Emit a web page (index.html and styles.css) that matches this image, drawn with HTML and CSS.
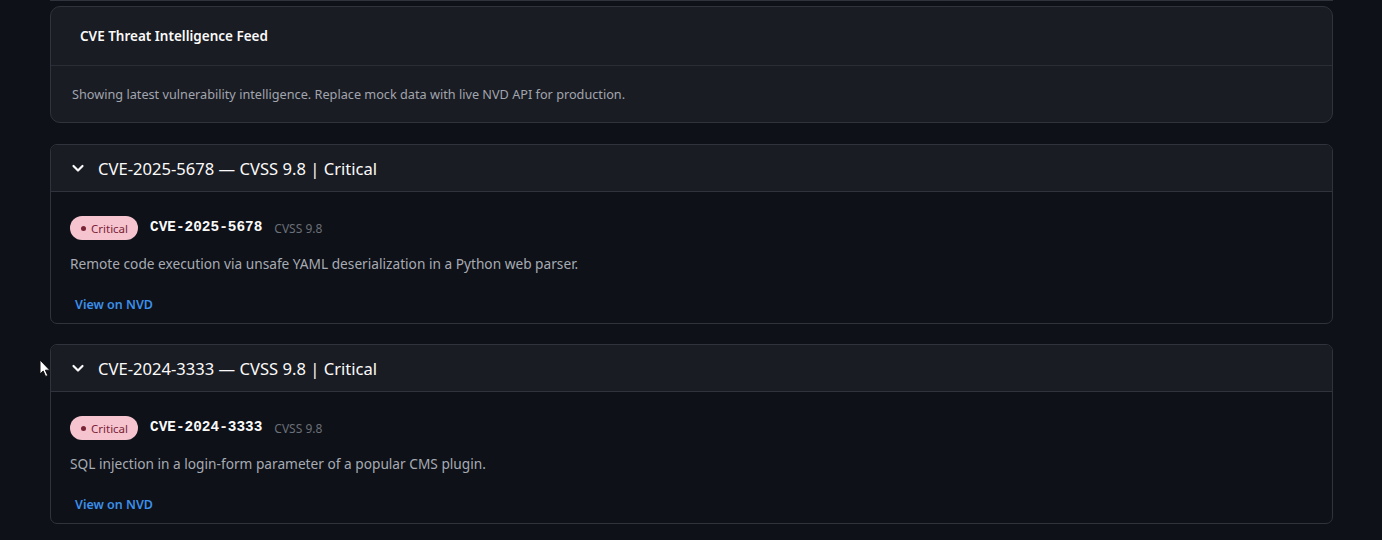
FILE: index.html
```html
<!DOCTYPE html>
<html><head>
<title>CVE Threat Intelligence Feed</title>
<link rel="stylesheet" href="styles.css">
</head><body>

<div class="main">
  <div class="prev-card"></div>

  <div class="card">
    <div class="card-head">CVE Threat Intelligence Feed</div>
    <div class="card-body">Showing latest vulnerability intelligence. Replace mock data with live NVD API for production.</div>
  </div>

  <div class="expander">
    <div class="exp-head">
      <svg class="chevron" viewBox="0 0 16 16" width="16" height="16"><path d="M3.5 6 L8 10.5 L12.5 6" fill="none" stroke="#fafafa" stroke-width="2.2" stroke-linecap="round" stroke-linejoin="round"/></svg>
      <span>CVE-2025-5678 — CVSS 9.8 | Critical</span>
    </div>
    <div class="exp-body">
      <div class="meta">
        <span class="badge"><span class="dot"></span>Critical</span>
        <code class="cve-id">CVE-2025-5678</code>
        <span class="score">CVSS 9.8</span>
      </div>
      <p class="desc">Remote code execution via unsafe YAML deserialization in a Python web parser.</p>
      <a class="nvd" href="#">View on NVD</a>
    </div>
  </div>

  <div class="expander">
    <div class="exp-head">
      <svg class="chevron" viewBox="0 0 16 16" width="16" height="16"><path d="M3.5 6 L8 10.5 L12.5 6" fill="none" stroke="#fafafa" stroke-width="2.2" stroke-linecap="round" stroke-linejoin="round"/></svg>
      <span>CVE-2024-3333 — CVSS 9.8 | Critical</span>
    </div>
    <div class="exp-body">
      <div class="meta">
        <span class="badge"><span class="dot"></span>Critical</span>
        <code class="cve-id">CVE-2024-3333</code>
        <span class="score">CVSS 9.8</span>
      </div>
      <p class="desc">SQL injection in a login-form parameter of a popular CMS plugin.</p>
      <a class="nvd" href="#">View on NVD</a>
    </div>
  </div>
</div>

<svg class="cursor" viewBox="0 0 12 19" width="12" height="19"><path d="M1 1 L1 15 L4.2 12 L6.6 17.5 L8.8 16.5 L6.4 11.2 L10.8 11.2 Z" fill="#fff" stroke="#111" stroke-width="1"/></svg>

</body></html>
```

FILE: styles.css
```css
html, body {
  margin: 0;
  padding: 0;
  background: #0e1117;
  font-family: "Noto Sans", "Open Sans", sans-serif;
  color: #fafafa;
  }
.main {
  padding: 0 49px 0 50px;
  display: flex;
  flex-direction: column;
  }
.prev-card {
  height: 0;
  border-bottom: 1px solid #30333c;
  margin-bottom: 5px;
  }
.card {
  background: #1a1c23;
  border: 1px solid #30333c;
  border-radius: 10px;
  margin-bottom: 21px;
  }
.card-head {
  height: 58px;
  padding-left: 29px;
  display: flex;
  align-items: center;
  font-size: 13.5px;
  font-weight: 600;
  border-bottom: 1px solid #2a2d35;
  }
.card-body {
  height: 56px;
  padding-left: 21px;
  display: flex;
  align-items: center;
  font-size: 12.7px;
  color: #a1a5ae;
  }
.expander {
  border: 1px solid #30333c;
  border-radius: 7px;
  margin-bottom: 20px;
  overflow: hidden;
  }
.exp-head {
  height: 46px;
  background: #1a1c23;
  border-bottom: 1px solid #30333c;
  display: flex;
  align-items: center;
  padding-left: 19px;
  gap: 12px;
  font-size: 16.6px;
  }
.chevron {
  display: block;
  }
.exp-body {
  padding: 24px 19px 8px;
  }
.meta {
  display: flex;
  align-items: center;
  gap: 12px;
  height: 24px;
  }
.badge {
  display: inline-flex;
  align-items: center;
  gap: 5px;
  height: 24px;
  padding: 0 10px 0 11px;
  border-radius: 12px;
  background: #f5c4cf;
  color: #7a2236;
  font-size: 11.5px;
  }
.dot {
  width: 5px;
  height: 5px;
  border-radius: 50%;
  background: #7a2236;
  }
.cve-id {
  font-family: "Liberation Mono", monospace;
  font-weight: bold;
  font-size: 14.4px;
  color: #fafafa;
  margin-top: -2px;
  }
.score {
  font-size: 12px;
  color: #6b6f78;
  }
.desc {
  margin: 13px 0 0;
  font-size: 13.7px;
  color: #a7abb4;
  line-height: 22px;
  }
.nvd {
  display: inline-block;
  margin: 20px 0 0 5px;
  font-size: 12.5px;
  font-weight: 600;
  color: #3b8eea;
  text-decoration: none;
  line-height: 20px;
  }
.cursor {
  position: absolute;
  left: 39px;
  top: 359px;
  }
```
